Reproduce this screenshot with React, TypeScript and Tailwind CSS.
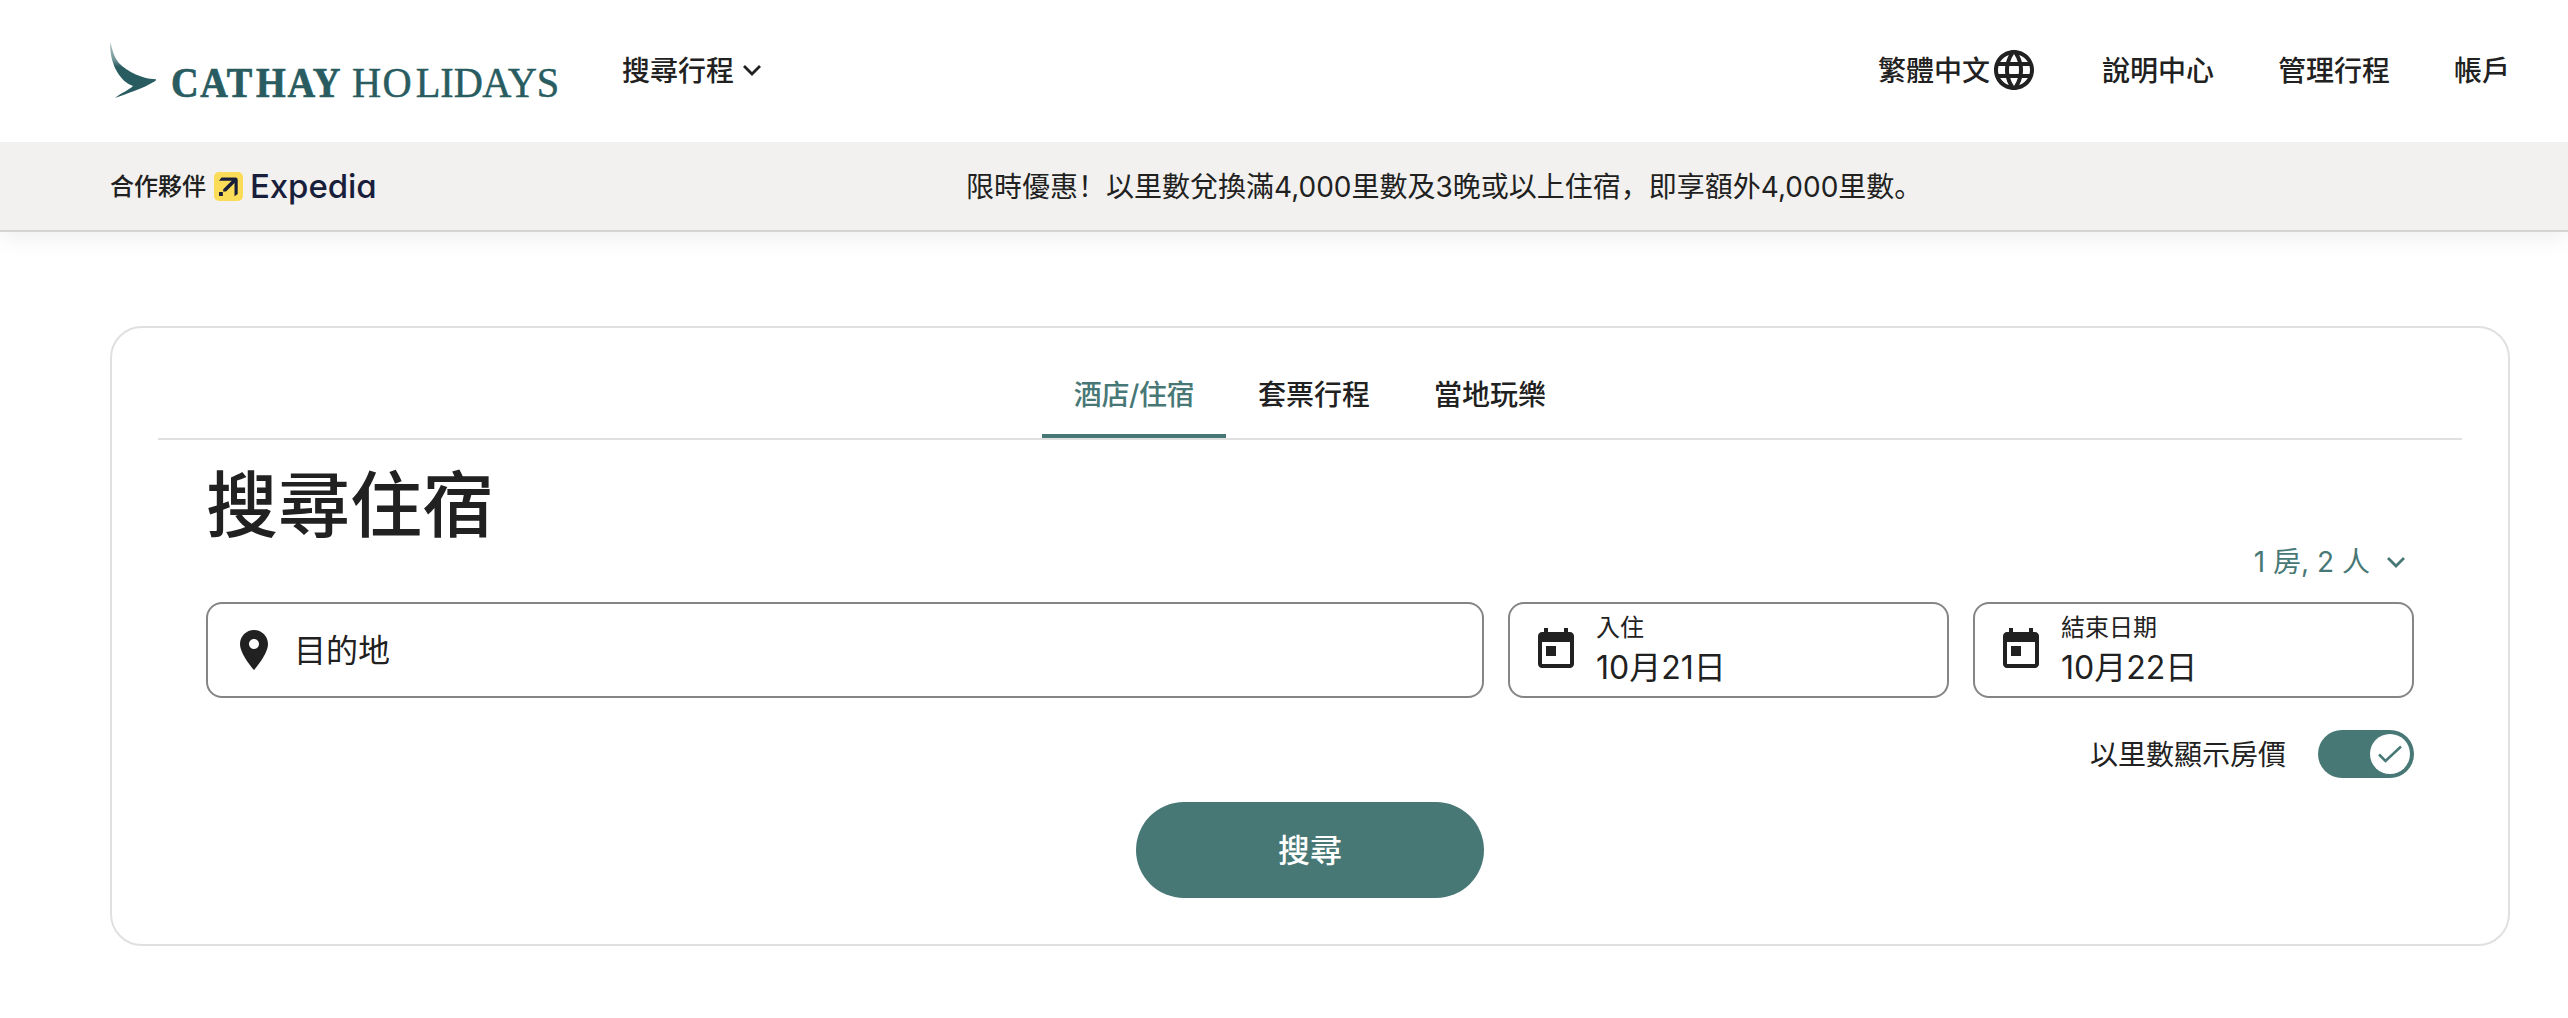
import React from "react";

function Chevron({ className = "" }: { className?: string }) {
  return (
    <svg viewBox="0 0 32 32" className={`size-8 shrink-0 ${className}`} fill="none" stroke="currentColor" strokeWidth="2.8">
      <path d="M8 12l8 8 8-8" />
    </svg>
  );
}

function CathayLogo() {
  return (
    <svg width="454" height="80" viewBox="110 30 454 80" className="block shrink-0 overflow-visible" fill="#285c61">
      <defs>
        <linearGradient id="wingFade" gradientUnits="userSpaceOnUse" x1="0" y1="42" x2="0" y2="67">
          <stop offset="0" stopColor="#285c61" stopOpacity="0.35" />
          <stop offset="0.7" stopColor="#285c61" stopOpacity="0.65" />
          <stop offset="1" stopColor="#285c61" />
        </linearGradient>
      </defs>
      <path
        d="M110.500 42C112 49 114 57 118.500 62.500C124 69 140 79 156 79.200C156 80.400 155.500 81 154 81.700C142 89 128 93 115 98C121 93 129 90 133 86C121 82 110.500 66 110.200 46Z"
        fill="url(#wingFade)"
      />
      <text
        transform="translate(171 97.300) scale(0.9 1)"
        x="0 32.600 62 94.500 129.500 157.500"
        className="font-['Liberation_Serif',serif] text-[42.500px] font-bold"
        stroke="#285c61"
        strokeWidth="0.700"
      >
        CATHAY
      </text>
      <text
        transform="translate(352 97.300) scale(0.95 1)"
        x="0 32 67 93 107.200 137 164 194.500"
        className="font-['Liberation_Serif',serif] text-[42.500px]"
        stroke="#285c61"
        strokeWidth="0.500"
      >
        HOLIDAYS
      </text>
    </svg>
  );
}

function ExpediaLogo() {
  return (
    <div className="ml-2 flex items-center text-[#191e3b]">
      <svg viewBox="0 0 29 29" className="size-[29px]">
        <rect width="29" height="29" rx="5" fill="#fbdc58" />
        <path fill="#191e3b" d="M7.500 5.500H21.500q2.200 0 2.200 2.200V22l-3.200 2.300V11L12 19.500H9.200V17.200L17.700 8.700H5z M5 20h3.900v3.900H5z" />
      </svg>
      <span className="ml-[7px] font-['Inter',sans-serif] text-[33px] leading-none font-medium tracking-[-0.1px] [font-feature-settings:'cv11']">
        Expedia
      </span>
    </div>
  );
}

function DateField({ label, value }: { label: string; value: string }) {
  return (
    <button className="flex h-24 flex-1 items-center rounded-2xl border-2 border-[#858585] px-[22px] text-left">
      <svg viewBox="0 0 24 24" className="size-12 shrink-0" fill="currentColor">
        <path d="M19 3h-1V1h-2v2H8V1H6v2H5c-1.110 0-1.990.9-1.990 2L3 19c0 1.100.890 2 2 2h14c1.100 0 2-.9 2-2V5c0-1.100-.9-2-2-2zm0 16H5V8h14v11zM7 10h5v5H7z" />
      </svg>
      <span className="ml-4 flex flex-col">
        <span className="text-[24px] leading-9">{label}</span>
        <span className="text-[32px] leading-11">{value}</span>
      </span>
    </button>
  );
}

function Mark({ children }: { children: React.ReactNode }) {
  return (
    <span lang="zh-Hans" className="font-['Noto_Sans_CJK_SC',sans-serif]">
      {children}
    </span>
  );
}

const tabs = ["酒店/住宿", "套票行程", "當地玩樂"];

export default function App() {
  return (
    <div
      lang="zh-Hant"
      className="flex h-[1018px] flex-col bg-white font-['Inter','Noto_Sans_CJK_TC',sans-serif] text-[28px] font-[375] text-[#212121]"
    >
      <header className="relative z-10 flex h-[142px] shrink-0 items-center bg-white pr-[58px] pb-0.5 pl-[110px] font-medium">
        <CathayLogo />
        <nav className="ml-[58px] flex items-center">
          <span className="pt-0.5">搜尋行程</span>
          <Chevron className="ml-0.5" />
        </nav>
        <nav className="ml-auto flex items-center gap-16">
          <span className="flex items-center">
            <span className="pt-0.5">繁體中文</span>
            <svg viewBox="0 0 24 24" className="size-12" fill="currentColor">
              <path d="M11.990 2C6.470 2 2 6.480 2 12s4.470 10 9.990 10C17.520 22 22 17.520 22 12S17.520 2 11.990 2zm6.930 6h-2.950c-.32-1.250-.78-2.450-1.380-3.560 1.840.63 3.370 1.910 4.330 3.560zM12 4.040c.83 1.200 1.480 2.530 1.910 3.960h-3.820c.43-1.430 1.080-2.760 1.910-3.960zM4.260 14C4.100 13.360 4 12.690 4 12s.1-1.360.26-2h3.380c-.08.66-.14 1.320-.14 2s.06 1.340.14 2H4.260zm.82 2h2.950c.32 1.250.78 2.450 1.380 3.560-1.840-.63-3.370-1.900-4.330-3.560zm2.950-8H5.080c.96-1.660 2.490-2.930 4.330-3.560C8.810 5.550 8.350 6.750 8.030 8zM12 19.960c-.83-1.200-1.480-2.530-1.910-3.960h3.820c-.43 1.430-1.080 2.760-1.910 3.960zM14.340 14H9.660c-.09-.66-.16-1.320-.16-2s.07-1.350.16-2h4.680c.09.65.16 1.320.16 2s-.07 1.340-.16 2zm.25 5.560c.6-1.110 1.060-2.310 1.380-3.560h2.950c-.96 1.650-2.490 2.930-4.330 3.560zM16.360 14c.08-.66.14-1.320.14-2s-.06-1.340-.14-2h3.380c.16.64.26 1.310.26 2s-.1 1.360-.26 2h-3.380z" />
            </svg>
          </span>
          <span className="pt-0.5">說明中心</span>
          <span className="pt-0.5">管理行程</span>
          <span className="pt-0.5">帳戶</span>
        </nav>
      </header>

      <div className="grid h-[90px] shrink-0 grid-cols-[856px_1fr] items-center border-b-2 border-[#d4d4d4] bg-[#f2f1ef] pl-[110px] shadow-[0_4px_24px_rgba(0,0,0,0.08)]">
        <div className="flex items-center">
          <span className="pt-0.5 text-[24px] font-medium">合作夥伴</span>
          <ExpediaLogo />
        </div>
        <p className="whitespace-nowrap">
          限時優惠<Mark>！</Mark>以里數兌換滿4,000里數及3晚或以上住宿<Mark>，</Mark>即享額外4,000里數<Mark>。</Mark>
        </p>
      </div>

      <main className="mt-[94px] ml-[110px] h-[620px] w-[2400px] shrink-0 rounded-[32px] border-2 border-[#e0e0e0] px-[46px]">
        <div className="flex h-28 justify-center border-b-2 border-[#e0e0e0] font-medium">
          {tabs.map((tab, i) => (
            <button
              key={tab}
              className={
                i === 0
                  ? "w-[184px] border-b-4 border-[#487876] pt-[27px] text-center tracking-[-0.4px] whitespace-nowrap text-[#487876]"
                  : "border-b-4 border-transparent px-8 pt-[27px]"
              }
            >
              {tab}
            </button>
          ))}
        </div>

        <section className="px-12">
          <h1 className="h-[86px] pt-3 text-[72px] leading-[106px] font-medium">搜尋住宿</h1>
          <div className="mt-3 flex h-12 items-center justify-end text-[#487876]">
            <span>1 房, 2 人</span>
            <Chevron className="mr-0.5 ml-2.5" />
          </div>
          <div className="mt-4 flex gap-6">
            <div className="flex h-24 w-[1278px] items-center rounded-2xl border-2 border-[#858585] px-[22px] text-[32px]">
              <svg viewBox="0 0 24 24" className="size-12" fill="currentColor">
                <path d="M12 2C8.130 2 5 5.130 5 9c0 5.250 7 13 7 13s7-7.750 7-13c0-3.870-3.130-7-7-7zm0 9.500c-1.380 0-2.500-1.120-2.500-2.500s1.120-2.500 2.500-2.500 2.500 1.120 2.500 2.500-1.120 2.500-2.500 2.500z" />
              </svg>
              <span className="ml-4 pt-0.5">目的地</span>
            </div>
            <DateField label="入住" value="10月21日" />
            <DateField label="結束日期" value="10月22日" />
          </div>
          <div className="mt-8 flex h-12 items-center justify-end">
            <span className="pt-0.5">以里數顯示房價</span>
            <span className="ml-8 flex h-12 w-24 items-center justify-end rounded-full bg-[#487876] pr-1">
              <span className="flex size-10 items-center justify-center rounded-full bg-white">
                <svg viewBox="0 0 24 18" className="h-[18px] w-6" fill="none" stroke="#487876" strokeWidth="2.5">
                  <path d="m1 9.500 6.500 6.500L23 1.500" />
                </svg>
              </span>
            </span>
          </div>
          <button className="mx-auto mt-6 block h-24 w-[348px] rounded-full bg-[#487876] pt-0.5 text-[32px] font-medium text-white">
            搜尋
          </button>
        </section>
      </main>
    </div>
  );
}
